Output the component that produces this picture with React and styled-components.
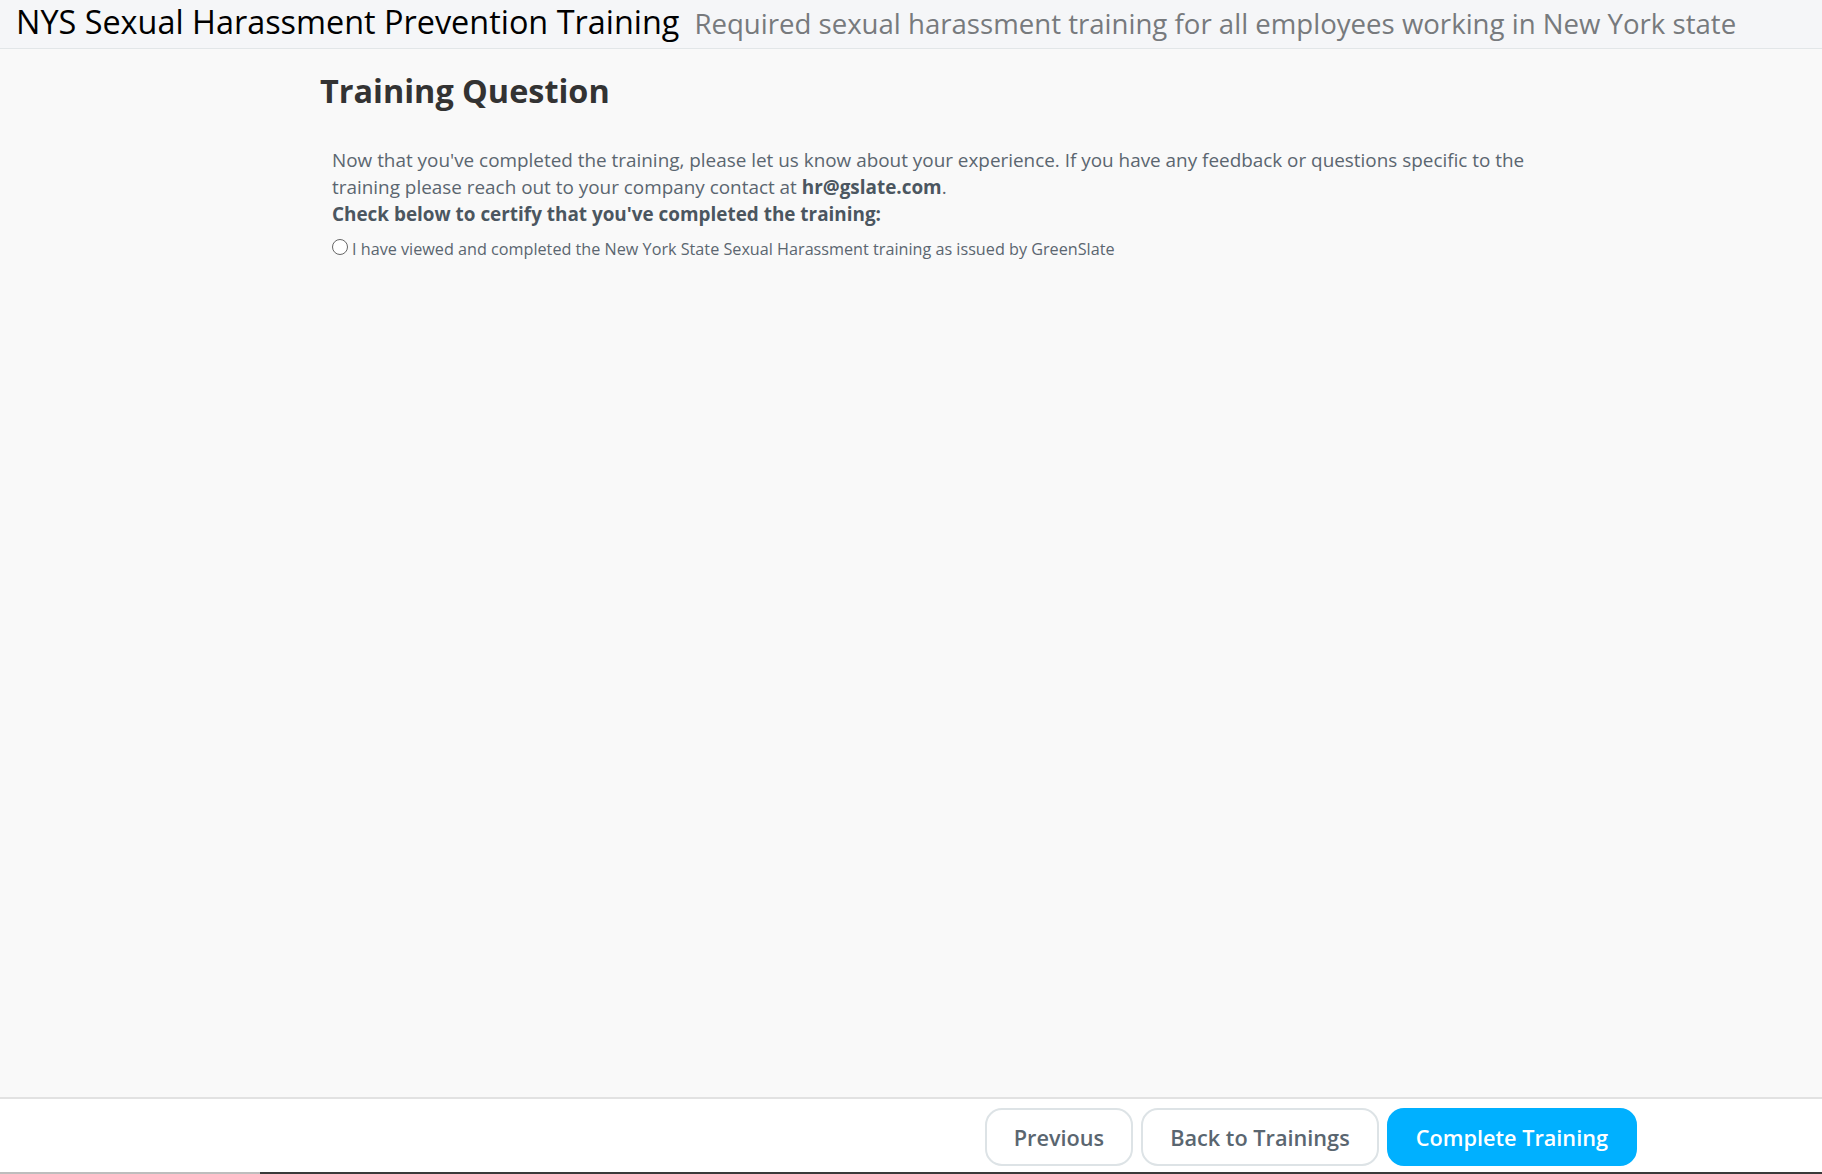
import React from 'react'
import styled, { createGlobalStyle } from 'styled-components'

const GlobalStyle = createGlobalStyle`
    * {
        box-sizing: border-box;
    }
    html, body {
        margin: 0;
        padding: 0;
        height: 100%;
    }
    body {
        font-family: "Open Sans", "Noto Sans", sans-serif;
        background-color: #f9f9f9;
    }
    #root {
        min-height: 100vh;
    }
`

const App = () => {
    return (
        <Page>
            <GlobalStyle />
            <Header>
                <Title>NYS Sexual Harassment Prevention Training</Title>
                <Subtitle>Required sexual harassment training for all employees working in New York state</Subtitle>
            </Header>

            <Main>
                <Heading>Training Question</Heading>
                <Body>
                    <p>
                        Now that you've completed the training, please let us know about your experience. If you have any feedback or questions specific to the training please reach out to your company contact at <strong>hr@gslate.com</strong>.
                    </p>
                    <Certify>Check below to certify that you've completed the training:</Certify>
                    <RadioLabel>
                        <Radio type="radio" name="certify" />
                        I have viewed and completed the New York State Sexual Harassment training as issued by GreenSlate
                    </RadioLabel>
                </Body>
            </Main>

            <Footer>
                <ButtonRow>
                    <Button>Previous</Button>
                    <Button>Back to Trainings</Button>
                    <Button primary>Complete Training</Button>
                </ButtonRow>
                <BottomBar>
                    <BarSegment width="260px" color="#bdbdbd" />
                    <BarSegment color="#3a3a3a" />
                </BottomBar>
            </Footer>
        </Page>
    )
}

export default App

const Page = styled.div`
    min-height: 100vh;
    display: flex;
    flex-direction: column;
`

const Header = styled.header`
    height: 49px;
    display: flex;
    align-items: baseline;
    gap: 15px;
    padding: 0 16px;
    background-color: #f5f6f8;
    border-bottom: 1px solid #e2e6e8;
    white-space: nowrap;
`

const Title = styled.h1`
    margin: 0;
    font-size: 32.4px;
    line-height: 42px;
    font-weight: 400;
    color: #000;
`

const Subtitle = styled.span`
    font-size: 27.6px;
    line-height: 42px;
    color: #777a7d;
`

const Main = styled.main`
    flex: 1;
    padding: 18px 0 0 320px;
`

const Heading = styled.h2`
    margin: 0;
    font-size: 32.4px;
    line-height: 46px;
    font-weight: 700;
    color: #333;
`

const Body = styled.div`
    max-width: 1225px;
    padding: 34px 0 0 12px;
    font-size: 18.9px;
    line-height: 27px;
    color: #5b6670;

    p {
        margin: 0;
    }
    strong {
        font-weight: 700;
        color: #4b5660;
    }
`

const Certify = styled.p`
    font-weight: 700;
    color: #4b5660;
`

const RadioLabel = styled.label`
    display: flex;
    align-items: center;
    margin-top: 9px;
    font-size: 16.2px;
    line-height: 24px;
    color: #5b6670;
`

const Radio = styled.input`
    appearance: none;
    flex: none;
    width: 16px;
    height: 16px;
    margin: -4px 4px 0 0;
    border: 1.5px solid #666;
    border-radius: 50%;
    background: #fff;
`

const Footer = styled.footer`
    background-color: #fff;
    border-top: 2px solid #e2e2e2;
`

const ButtonRow = styled.div`
    display: flex;
    justify-content: flex-end;
    gap: 8px;
    padding: 9px 185px 6px 0;
`

const Button = styled.button`
    height: 58px;
    padding: 0 27px;
    border: 2px solid ${p => (p.primary ? '#00b0ff' : '#dde3e6')};
    border-radius: 17px;
    background-color: ${p => (p.primary ? '#00b0ff' : '#fff')};
    color: ${p => (p.primary ? '#fff' : '#5a6670')};
    font-family: "Open Sans", sans-serif;
    font-size: 21.7px;
    font-weight: 600;
    cursor: pointer;
`

const BottomBar = styled.div`
    display: flex;
    height: 2px;
`

const BarSegment = styled.div`
    flex: ${p => (p.width ? `0 0 ${p.width}` : '1')};
    background-color: ${p => p.color};
`
